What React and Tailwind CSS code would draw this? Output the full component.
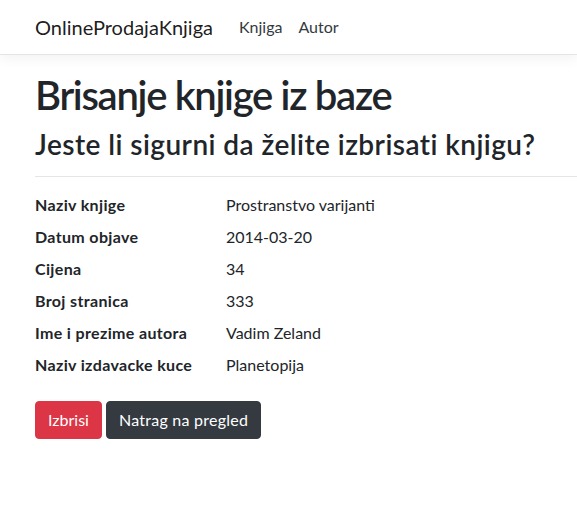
export default function App() {
  const rows = [
    ["Naziv knjige", "Prostranstvo varijanti"],
    ["Datum objave", "2014-03-20"],
    ["Cijena", "34"],
    ["Broj stranica", "333"],
    ["Ime i prezime autora", "Vadim Zeland"],
    ["Naziv izdavacke kuce", "Planetopija"],
  ];
  return (
    <div className="min-h-[514px] bg-white text-[#212529] font-['Lato',sans-serif] overflow-hidden">
      <nav className="h-[55px] bg-white border-b border-[#e5e5e5] shadow-[0_4px_12px_rgba(0,0,0,0.05)] flex items-center pl-[35px]">
        <span className="text-[20px] leading-[30px] text-[rgba(0,0,0,0.9)] mr-[26px]">OnlineProdajaKnjiga</span>
        <span className="text-[16px] leading-6 text-[#343a40] mr-[16px]">Knjiga</span>
        <span className="text-[16px] leading-6 text-[#343a40]">Autor</span>
      </nav>
      <main className="pl-[35px] pt-[16px]">
        <h1 className="text-[40px] leading-[48px] font-semibold tracking-[-1.3px] mb-2">Brisanje knjige iz baze</h1>
        <h3 className="text-[28px] leading-[34px] font-semibold tracking-[0.45px]">Jeste li sigurni da želite izbrisati knjigu?</h3>
        <hr className="mt-[15px] border-t border-[rgba(0,0,0,0.1)] w-[600px]" />
        <dl className="pt-4 pb-2 flex flex-col gap-2 text-[16px] leading-6">
          {rows.map(([k, v]) => (
            <div key={k} className="flex">
              <dt className="w-[191px] font-bold tracking-[0.35px]">{k}</dt>
              <dd>{v}</dd>
            </div>
          ))}
        </dl>
        <div className="flex gap-1 mt-4">
          <button className="h-[38px] px-3 rounded bg-[#dc3545] text-white text-[16px] border border-[#dc3545]">Izbrisi</button>
          <button className="h-[38px] px-3 rounded bg-[#343a40] text-white text-[16px] tracking-[0.25px] border border-[#343a40]">Natrag na pregled</button>
        </div>
      </main>
    </div>
  );
}
